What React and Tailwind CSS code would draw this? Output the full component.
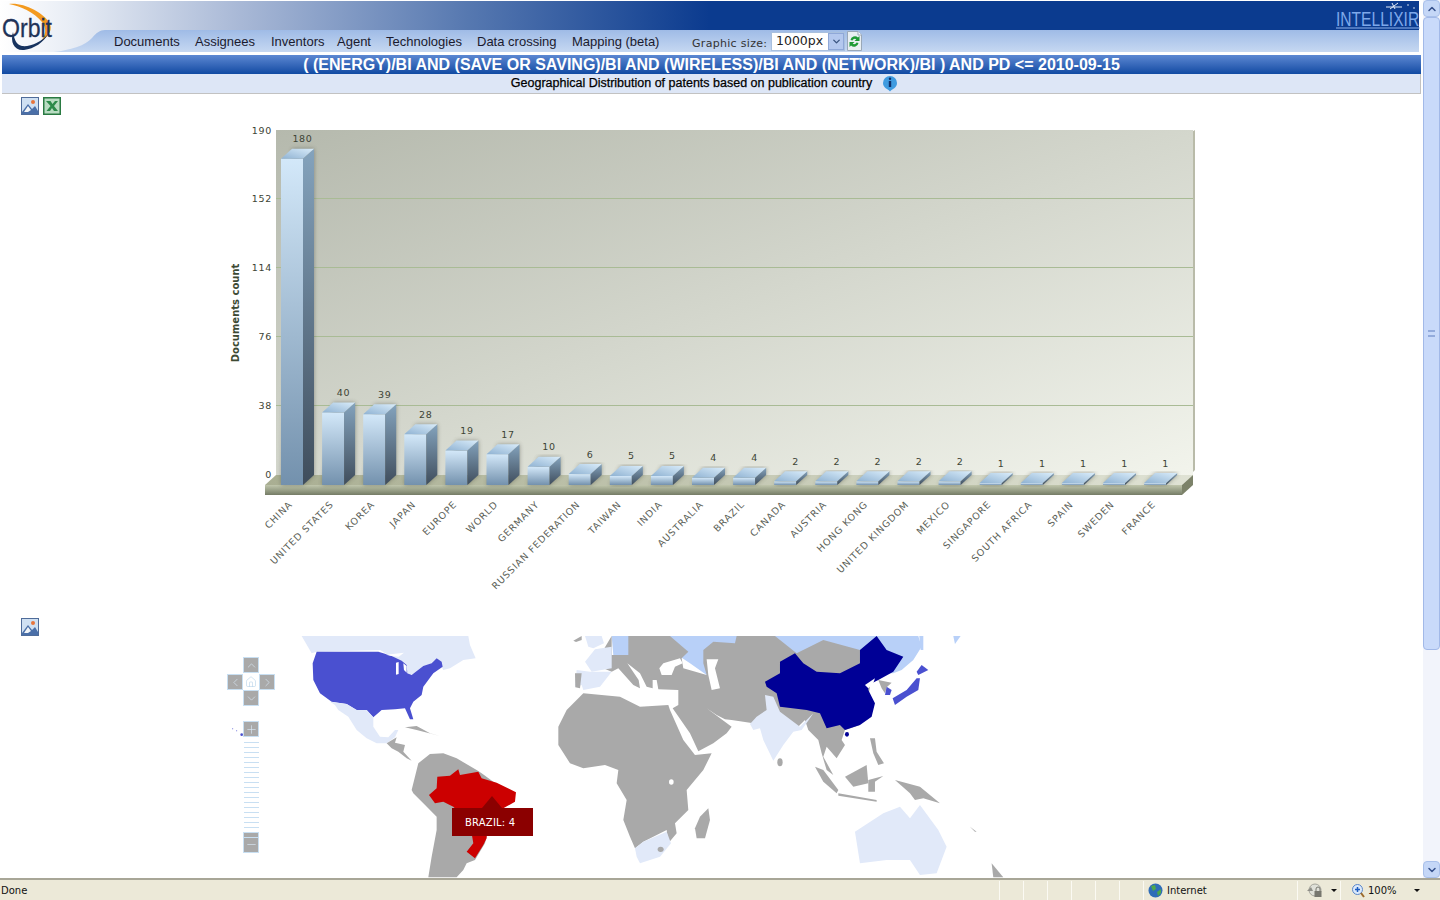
import React from "react";
import { ChevronUp, ChevronDown, ChevronLeft, ChevronRight, Home, Plus, Minus } from "lucide-react";

const NAV = [["Documents", "w-[81px]"], ["Assignees", "w-[76px]"], ["Inventors", "w-[66px]"], ["Agent", "w-[49px]"], ["Technologies", "w-[91px]"], ["Data crossing", "w-[95px]"], ["Mapping (beta)", "w-[120px]"]];
const DATA = [["CHINA",180],["UNITED STATES",40],["KOREA",39],["JAPAN",28],["EUROPE",19],["WORLD",17],["GERMANY",10],["RUSSIAN FEDERATION",6],["TAIWAN",5],["INDIA",5],["AUSTRALIA",4],["BRAZIL",4],["CANADA",2],["AUSTRIA",2],["HONG KONG",2],["UNITED KINGDOM",2],["MEXICO",2],["SINGAPORE",1],["SOUTH AFRICA",1],["SPAIN",1],["SWEDEN",1],["FRANCE",1]];
const TICKS = [[190,130],[152,198],[114,267],[76,336],[38,405],[0,474.5]];

function Chart() {
  const mono = { fontFamily: "'DejaVu Sans', sans-serif" };
  return (
    <svg viewBox="210 120 1010 490" className="block w-[1010px] h-[490px] ml-[210px] mt-[5px]" style={mono}>
      <defs>
        <linearGradient id="wall" x1="0" y1="0" x2="1" y2="1"><stop offset="0" stopColor="#b5b9ad"/><stop offset="1" stopColor="#f2f4ec"/></linearGradient>
        <linearGradient id="front" x1="0" y1="0" x2="0" y2="1"><stop offset="0" stopColor="#d3e8f9"/><stop offset="1" stopColor="#7391ad"/></linearGradient>
        <linearGradient id="side" x1="0" y1="0" x2="0" y2="1"><stop offset="0" stopColor="#84a3bd"/><stop offset="1" stopColor="#3f4d5c"/></linearGradient>
        <linearGradient id="top" x1="0" y1="1" x2="1" y2="0"><stop offset="0" stopColor="#8fb2d2"/><stop offset="1" stopColor="#d9ecfa"/></linearGradient>
        <linearGradient id="floor" x1="0" y1="0" x2="0" y2="1"><stop offset="0" stopColor="#c0c6ac"/><stop offset="1" stopColor="#757c66"/></linearGradient>
        <linearGradient id="floortop" x1="0" y1="0" x2="1" y2="0"><stop offset="0" stopColor="#a9ae92"/><stop offset="1" stopColor="#dfe2d4"/></linearGradient>
        <filter id="blur" x="-40%" y="-10%" width="180%" height="120%"><feGaussianBlur stdDeviation="2.2"/></filter>
      </defs>
      <polygon points="1195,130 1195,470 1190,475 1190,133" fill="#b9bba9"/>
      <rect x="276" y="130" width="917" height="345" fill="url(#wall)"/>
      <polygon points="265,485 276,475 1193,475 1182,485" fill="url(#floortop)" />
      <polygon points="1182,485 1193,475 1193,485 1182,495" fill="#7c8269"/>
      <rect x="265" y="485" width="917" height="10" fill="url(#floor)"/>
      {TICKS.slice(1, 5).map(([v, y]) => <line key={v} x1="276" x2="1193" y1={y + 0.5} y2={y + 0.5} stroke="#a9bb95" />)}
      {TICKS.map(([v, y]) => <text key={v} x="272" y={y + 3.5} textAnchor="end" fontSize="9.5" letterSpacing="0.7" fill="#3d4435">{v}</text>)}
      <text transform="translate(239 313) rotate(-90)" textAnchor="middle" fontSize="10" fontWeight="bold" fill="#3d4a33">Documents count</text>
      {DATA.map(([name, v], i) => {
        const x = 281 + i * 41.1, h = Math.max(v * 1.813, 2), w = 22, y = 485 - h;
        return (
          <g key={name}>
            <polygon points={`${x + 11},${y - 10} ${x + 33},${y - 10} ${x + 33},475 ${x + 22},485 ${x},485`} fill="#3c4034" opacity="0.45" filter="url(#blur)" />
            <rect x={x} y={y} width={w} height={h} fill="url(#front)" />
            <polygon points={`${x + w},${y} ${x + w + 11},${y - 10} ${x + w + 11},475 ${x + w},485`} fill="url(#side)" />
            <polygon points={`${x},${y} ${x + 11},${y - 10} ${x + 33},${y - 10} ${x + 22},${y}`} fill="url(#top)" />
            <text x={x + 21.5} y={y - 16.5} textAnchor="middle" fontSize="9.5" letterSpacing="0.7" fill="#3d4435">{v}</text>
            <text transform={`translate(${x + 12} 505) rotate(-45)`} textAnchor="end" fontSize="9.5" letterSpacing="0.85" fill="#5c5f58">{name}</text>
          </g>
        );
      })}
    </svg>
  );
}

const L = "#e1e9f9", R = "#b8d0f8", G = "#a9a9a9", B = "#4a50d0", N = "#000096", RED = "#cc0000";
const WEST = [
  [L,"275,18 775,18 780,45 797,85 760,90 720,115 700,120 680,85 640,120 600,135 560,90 510,60 320,65 305,70"],
  [B,"320,65 505,65 520,70 545,78 575,92 590,105 592,130 605,135 640,108 665,100 680,85 695,95 698,110 670,130 655,150 640,170 635,195 610,215 600,235 610,268 600,268 585,235 555,238 515,240 490,262 470,240 440,240 410,222 365,215 330,190 310,150 308,100"],
  ["#fff","528,74 582,68 566,80 545,78"],
  ["#fff","558,98 566,96 566,132 558,134"],
  ["#fff","580,100 590,108 590,128 582,120"],
  [L,"360,215 410,222 440,240 470,240 490,262 490,290 510,320 535,322 555,300 565,300 555,322 530,340 500,340 470,325 440,300 415,260 385,240 375,225"],
  [G,"530,340 560,322 555,338 585,345 580,365 605,392 590,385 565,365 545,355"],
  [G,"585,292 620,288 660,310 690,318 620,300"],
  [G,"605,480 625,400 660,372 700,370 740,385 800,420 815,430 850,455 900,480 880,535 830,620 825,640 795,690 770,700 760,720 740,742 655,742 665,680 680,600 680,560 640,520 610,490"],
  [RED,"682,440 720,437 745,418 750,435 805,425 815,445 860,458 918,487 915,515 880,535 830,600 830,625 820,645 795,685 770,665 790,640 785,610 770,570 730,530 700,515 675,520 657,495 680,475"],
];
const EAST = [
  [R,"215,18 1135,18 1145,50 1120,90 1085,120 1060,130 960,130 500,135 450,100 390,60 270,75 220,75"],
  [R,"1240,18 1262,18 1245,42"],
  [R,"1138,18 1150,18 1150,60 1142,60"],
  [L,"135,18 185,18 192,40 160,55 145,50"],
  [G,"100,32 125,18 125,30 108,36"],
  [G,"190,60 215,18 215,75 265,75 265,18 390,18 445,65 425,85 430,115 500,135 490,100 490,60 520,35 585,40 590,18 705,18 770,70 850,30 960,60 960,85 1000,110 985,200 960,285 915,300 905,330 915,345 890,385 860,350 850,380 880,435 860,420 845,370 835,330 805,300 795,270 770,295 740,280 650,262 640,280 575,270 555,268 530,255 500,235 575,290 560,310 520,340 475,364 450,310 398,235 415,225 415,180 355,178 350,150 338,150 338,175 320,170 300,130 262,100 296,150 300,175 280,165 235,115 215,125 190,115"],
  [L,"165,58 215,50 215,115 155,125 135,95"],
  [L,"110,120 150,125 215,125 180,170 130,180 125,165 105,170"],
  [G,"105,130 125,130 120,175 106,172"],
  ["#fff","370,100 420,85 428,100 405,110 395,135 365,135 358,115"],
  ["#fff","500,88 535,88 525,115 540,175 515,180 505,135"],
  [G,"130,190 240,200 300,230 385,225 390,240 430,330 465,375 515,370 490,420 440,480 445,540 405,580 410,610 385,640 380,600 310,635 285,655 270,620 250,570 260,510 230,460 235,420 195,405 130,415 90,400 55,345 55,290 80,240"],
  [L,"285,655 310,635 380,605 393,640 360,680 300,700 290,680"],
  [G,"505,535 510,570 495,625 470,625 465,595 480,560"],
  [L,"650,260 680,240 675,195 700,200 720,245 780,290 820,250 810,265 785,300 760,305 730,345 700,392 670,330 660,295 640,300 630,282"],
  [N,"675,155 720,130 720,95 765,70 790,100 830,125 900,130 960,100 960,60 1010,18 1040,60 1090,80 1060,125 1015,150 985,165 985,180 1005,220 995,260 960,285 915,300 900,285 860,295 840,250 800,240 720,230 710,190 680,170"],
  ["#fff","975,165 1005,145 1000,160 985,175"],
  [G,"1015,150 1055,158 1040,172 1035,190 1025,175"],
  [B,"1040,170 1055,180 1050,195 1035,195"],
  [B,"1130,125 1145,105 1165,120 1135,135"],
  [B,"1130,145 1140,145 1135,180 1100,200 1065,225 1058,205 1100,180"],
  [G,"825,410 850,420 895,480 890,490 850,455"],
  [G,"915,440 980,405 985,460 940,470"],
  [G,"895,490 1010,510 1010,515 895,497"],
  [G,"985,450 1030,438 1005,455 1005,485 985,485"],
  [G,"1065,450 1140,470 1200,520 1150,505 1125,510 1110,490"],
  [G,"990,325 1005,325 1010,365 1032,400 1015,405 1000,370"],
  [G,"1290,590 1310,605 1305,605"],
  [L,"945,605 1030,550 1080,530 1110,565 1140,525 1195,600 1220,650 1190,730 1140,735 1110,690 1040,690 960,700"],
  [G,"1355,700 1390,742 1360,742"],
];

function MapView() {
  const btn = "flex items-center justify-center w-[16px] h-[16px] bg-[#a9a9a9] border border-[#c8dff2] text-[#d8e8f5]";
  return (
    <div className="relative w-[820px] h-[242px] ml-[210px]">
      <svg viewBox="210 636 820 242" className="block w-[820px] h-[242px]">
        <g transform="translate(210 630) scale(0.3333)">
          {WEST.map(([c, p], i) => <polygon key={i} fill={c} points={p} />)}
          <circle cx="68" cy="296" r="1.5" fill={B} /><circle cx="80" cy="302" r="1.5" fill={B} /><circle cx="95" cy="314" r="4" fill={B} />
        </g>
        <g transform="translate(540 630) scale(0.3333)">
          {EAST.map(([c, p], i) => <polygon key={i} fill={c} points={p} />)}
          <ellipse cx="720" cy="397" rx="8" ry="12" fill={G} />
          <ellipse cx="362" cy="658" rx="9" ry="8" fill={G} />
          <ellipse cx="921" cy="313" rx="6" ry="7" fill={N} />
          <ellipse cx="394" cy="456" rx="7" ry="8" fill="#fff" />
        </g>
      </svg>
      <div className="absolute left-[17px] top-[21px] grid grid-cols-[16px_16px_16px] grid-rows-[17px_16px_16px]">
        <div />
        <div className={btn}><ChevronUp size={13} strokeWidth={1.2} /></div>
        <div />
        <div className={btn}><ChevronLeft size={13} strokeWidth={1.2} /></div>
        <div className="flex items-center justify-center bg-white text-[#b5d2ea]"><Home size={12} strokeWidth={1.2} /></div>
        <div className={btn}><ChevronRight size={13} strokeWidth={1.2} /></div>
        <div />
        <div className={btn}><ChevronDown size={13} strokeWidth={1.2} /></div>
      </div>
      <div className="absolute left-[33px] top-[85px] flex flex-col items-center w-[16px]">
        <div className={btn}><Plus size={13} strokeWidth={1.2} /></div>
        <div className="flex flex-col gap-[4px] pt-[5px] pb-[4px]">
          {Array.from({ length: 18 }).map((_, i) => <div key={i} className="w-[15px] h-px bg-[#c8dff2]" />)}
        </div>
        <div className="w-[16px] h-[21px] bg-[#a9a9a9] border border-[#c8dff2] flex items-end justify-center text-[#d8e8f5] relative">
          <div className="absolute left-0 right-0 top-[4px] h-px bg-[#c8dff2]" />
          <Minus size={13} strokeWidth={1.2} className="mb-[1px]" />
        </div>
      </div>
      <div className="absolute left-[242px] top-[172px] w-[81px] h-[28px] bg-[#8b0000] flex items-center pl-[13px] text-white text-[10px] tracking-[0.2px]" style={{ fontFamily: "'DejaVu Sans', sans-serif" }}>BRAZIL: 4</div>
      <div className="absolute left-[272px] top-[160px] w-0 h-0 border-l-[10px] border-r-[10px] border-b-[12px] border-l-transparent border-r-transparent border-b-[#8b0000]" />
    </div>
  );
}

function PicIcon() {
  return (
    <svg width="18" height="18" viewBox="0 0 18 18">
      <rect x="0.5" y="0.5" width="17" height="17" fill="#cfe0f2" stroke="#4f6c9a" />
      <path d="M1 15 L7 7 L11 12 L14 9 L17 14 V17 H1Z" fill="#4a6fa8" />
      <path d="M3 15 L7 9 L10 13 L7 15Z" fill="#f2f5f8" />
      <circle cx="12" cy="5" r="2" fill="#e8743b" />
    </svg>
  );
}
function XlsIcon() {
  return (
    <svg width="18" height="18" viewBox="0 0 18 18">
      <rect x="0.75" y="0.75" width="16.5" height="16.5" fill="#b9dcc2" stroke="#2a7a42" strokeWidth="1.5" />
      <path d="M3 4 H7.5 L9.5 7 L12 4 H15 L11 9 L15 14 H11 L9 11 L7 14 H3.5 L7.5 9Z" fill="#2d8a4a" />
    </svg>
  );
}

function Header() {
  const nav = { fontFamily: "'Liberation Sans', sans-serif" };
  const dj = { fontFamily: "'DejaVu Sans', sans-serif" };
  return (
    <div className="relative h-[52px] pt-px">
      <div className="h-[51px] mr-[2px] bg-[linear-gradient(90deg,#fff_0%,#e8edf5_5%,#a8b8d6_17%,#5678b0_33%,#0b3b8f_50%)] flex flex-col">
        <div className="h-[29px] shrink-0" />
        <div className="h-[22px] ml-[105px] flex items-center bg-gradient-to-b from-[#9fbbe6] to-[#c6d8f1] pl-[9px] text-[#1a1a2e]">
          {NAV.map(([n, w]) => <span key={n} className={`${w} text-[13px] mt-[1px] whitespace-nowrap`} style={nav}>{n}</span>)}
          <span className="text-[11px] mt-[6px] tracking-[0.3px] w-[79px] text-[#333]" style={dj}>Graphic size:</span>
          <div className="w-[74px] h-[19px] bg-white border border-[#a9c0de] flex items-center pl-[4px] text-[12.5px] text-[#222]" style={dj}>
            <span className="flex-1">1000px</span>
            <span className="w-[16px] h-[17px] shrink-0 bg-[#b4c8ee] border border-[#8fa8d8] text-[#3a5480] flex items-center justify-center"><ChevronDown size={11} strokeWidth={3} /></span>
          </div>
          <svg className="ml-[2px]" width="15" height="20" viewBox="0 0 15 20">
            <path d="M0.5 0.5 H11 L14.5 4 V19.5 H0.5Z" fill="#e9eff2" stroke="#9aa8b8" />
            <path d="M11 0.5 V4 H14.5" fill="#fff" stroke="#9aa8b8" />
            <path d="M3.5 9 A4.5 4.5 0 0 1 11 6.5 L12.5 5 V10 H7.5 L9.3 8.2 A2.5 2.5 0 0 0 5.5 9.5Z" fill="#1f9a35" />
            <path d="M11.5 12 A4.5 4.5 0 0 1 4 14.5 L2.5 16 V11 H7.5 L5.7 12.8 A2.5 2.5 0 0 0 9.5 11.5Z" fill="#1f9a35" />
          </svg>
        </div>
      </div>
      <svg className="absolute left-0 top-0" width="105" height="53" viewBox="0 0 105 53">
        <defs><linearGradient id="sw" x1="0" y1="0" x2="0" y2="1"><stop offset="0" stopColor="#9fbbe6" /><stop offset="1" stopColor="#c6d8f1" /></linearGradient></defs>
        <path d="M54 52 C70 50 85 46 92 38 C96 33 100 30 105 30 V52Z" fill="url(#sw)" />
        <path d="M9 4 C22 2 44 12 50 24 C53 32 46 38 40 42 C46 36 47 28 42 22 C34 12 20 6 9 4Z" fill="#f39a1f" />
        <path d="M13 32 C10 42 14 51 24 50 C34 49 44 42 48 34 C42 42 30 47 22 46 C16 45 14 38 13 32Z" fill="#17335f" />
        <text x="2" y="37" fontSize="26" fontFamily="'Liberation Sans', sans-serif" fill="#1f3358" stroke="#1f3358" strokeWidth="0.3" textLength="50" lengthAdjust="spacingAndGlyphs">Orbit</text>
      </svg>
      <svg className="absolute left-[1330px] top-0" width="91" height="30" viewBox="0 0 91 30">
        <path d="M56 7 H72 M62 3 L65 9 M68 3 L60 9" stroke="#e4ecf8" strokeWidth="1" fill="none" />
        <circle cx="78" cy="5" r="0.8" fill="#e4ecf8" /><circle cx="84" cy="8" r="0.8" fill="#e4ecf8" />
        <text transform="translate(6 26) scale(0.78 1)" fontSize="20" fontFamily="'Liberation Sans', sans-serif" fill="#7ea8ea">INTELLIXIR</text>
        <line x1="6" x2="90" y1="28" y2="28" stroke="#8fb4ee" strokeWidth="1" />
      </svg>
    </div>
  );
}

function Scrollbar() {
  return (
    <div className="w-[17px] ml-[2px] h-full bg-[#f2f4fb] flex flex-col shrink-0">
      <div className="h-[17px] bg-[#c5d7f7] border border-[#a9c0ea] rounded-sm flex items-center justify-center text-[#36518c]"><ChevronUp size={12} strokeWidth={3} /></div>
      <div className="h-[633px] bg-[#c9dafa] border border-[#a2b9e8] rounded-sm flex items-center justify-center">
        <div className="w-[7px] h-[7px] border-y-2 border-[#93abdc]" />
      </div>
      <div className="flex-1" />
      <div className="h-[17px] bg-[#c5d7f7] border border-[#a9c0ea] rounded-sm flex items-center justify-center text-[#36518c]"><ChevronDown size={12} strokeWidth={3} /></div>
    </div>
  );
}

function StatusBar() {
  const sep = "h-[20px] border-l border-[#fbfaf3] w-[24px] shrink-0";
  return (
    <div className="h-[22px] bg-[#ece9d8] border-t-2 border-[#a8a697] flex items-center text-[10px] text-[#111] pt-px" style={{ fontFamily: "'DejaVu Sans', sans-serif" }}>
      <span className="w-[999px] pl-px">Done</span>
      {[0,1,2,3,4,5].map((i) => <div key={i} className={sep} />)}
      <div className="w-[154px] h-[20px] border-l border-[#fbfaf3] pl-[4px] flex items-center gap-[4px] shrink-0">
        <svg width="15" height="15" viewBox="0 0 15 15"><circle cx="7.5" cy="7.5" r="7" fill="#2f6db8" /><path d="M3 3 L7 2 L8 6 L5 8Z M9 9 L13 6 L13 10 L10 13Z" fill="#4ea84a" /></svg>
        <span>Internet</span>
      </div>
      <div className="w-[43px] h-[20px] border-l border-[#fbfaf3] pl-[9px] flex items-center gap-[8px] shrink-0">
        <svg width="16" height="15" viewBox="0 0 16 15"><circle cx="8" cy="7" r="6" fill="#dfe0d8" stroke="#a5a59c" /><path d="M0 8 L4 4 L6 8Z" fill="#8f8f88" /><rect x="7.5" y="8" width="7" height="6" fill="#77776f" /><path d="M9 8 V6 A2 2 0 0 1 13 6 V8" fill="none" stroke="#77776f" /></svg>
        <span className="w-0 h-0 border-x-[3px] border-t-[3px] border-x-transparent border-t-[#111]" />
      </div>
      <div className="flex-1 h-[20px] border-l border-[#fbfaf3] pl-[11px] flex items-center shrink-0">
        <svg width="13" height="14" viewBox="0 0 13 14"><circle cx="5.5" cy="5.5" r="5" fill="#dbe9fb" stroke="#5a86c8" /><path d="M3 5.5 H8 M5.5 3 V8" stroke="#1c5cc0" strokeWidth="1.5" /><path d="M9 9 L12 13" stroke="#9c6a2c" strokeWidth="2" /></svg>
        <span className="ml-[3px] w-[46px]">100%</span>
        <span className="w-0 h-0 border-x-[3px] border-t-[3px] border-x-transparent border-t-[#111]" />
      </div>
    </div>
  );
}

export default function App() {
  return (
    <div className="h-[900px] w-[1440px] overflow-hidden bg-white flex flex-col">
      <div className="flex h-[878px]">
        <div className="w-[1421px] overflow-hidden shrink-0">
          <Header />
          <div className="mt-[3px] ml-[2px] h-[19px] bg-gradient-to-b from-[#5c88d2] to-[#0f4aa3] text-white text-[16px] font-bold text-center leading-[19px] whitespace-nowrap" style={{ fontFamily: "'Liberation Sans', sans-serif" }}>( (ENERGY)/BI AND (SAVE OR SAVING)/BI AND (WIRELESS)/BI AND (NETWORK)/BI ) AND PD &lt;= 2010-09-15</div>
          <div className="ml-[2px] h-[20px] bg-[#dde6f6] border-b border-r border-[#c2c2c2] flex items-center justify-center gap-[10px] text-[12.5px] text-black pr-[13px]" style={{ fontFamily: "'Liberation Sans', sans-serif" }}>
            <span className="[-webkit-text-stroke:0.25px_black] whitespace-nowrap">Geographical Distribution of patents based on publication country</span>
            <svg width="16" height="17" viewBox="0 0 16 17">
              <path d="M8 16.5 C6 14 1 13 1 8 A7 7 0 0 1 15 8 C15 13 10 14 8 16.5Z" fill="#3f9be0" />
              <circle cx="8" cy="3.8" r="1.2" fill="#0f2f6a" />
              <rect x="6.8" y="6" width="2.4" height="6" fill="#0f2f6a" />
            </svg>
          </div>
          <div className="flex gap-[4px] pl-[21px] pt-[3px]"><PicIcon /><XlsIcon /></div>
          <Chart />
          <div className="pl-[21px] mt-[8px] h-[18px]"><PicIcon /></div>
          <MapView />
        </div>
        <Scrollbar />
      </div>
      <StatusBar />
    </div>
  );
}
